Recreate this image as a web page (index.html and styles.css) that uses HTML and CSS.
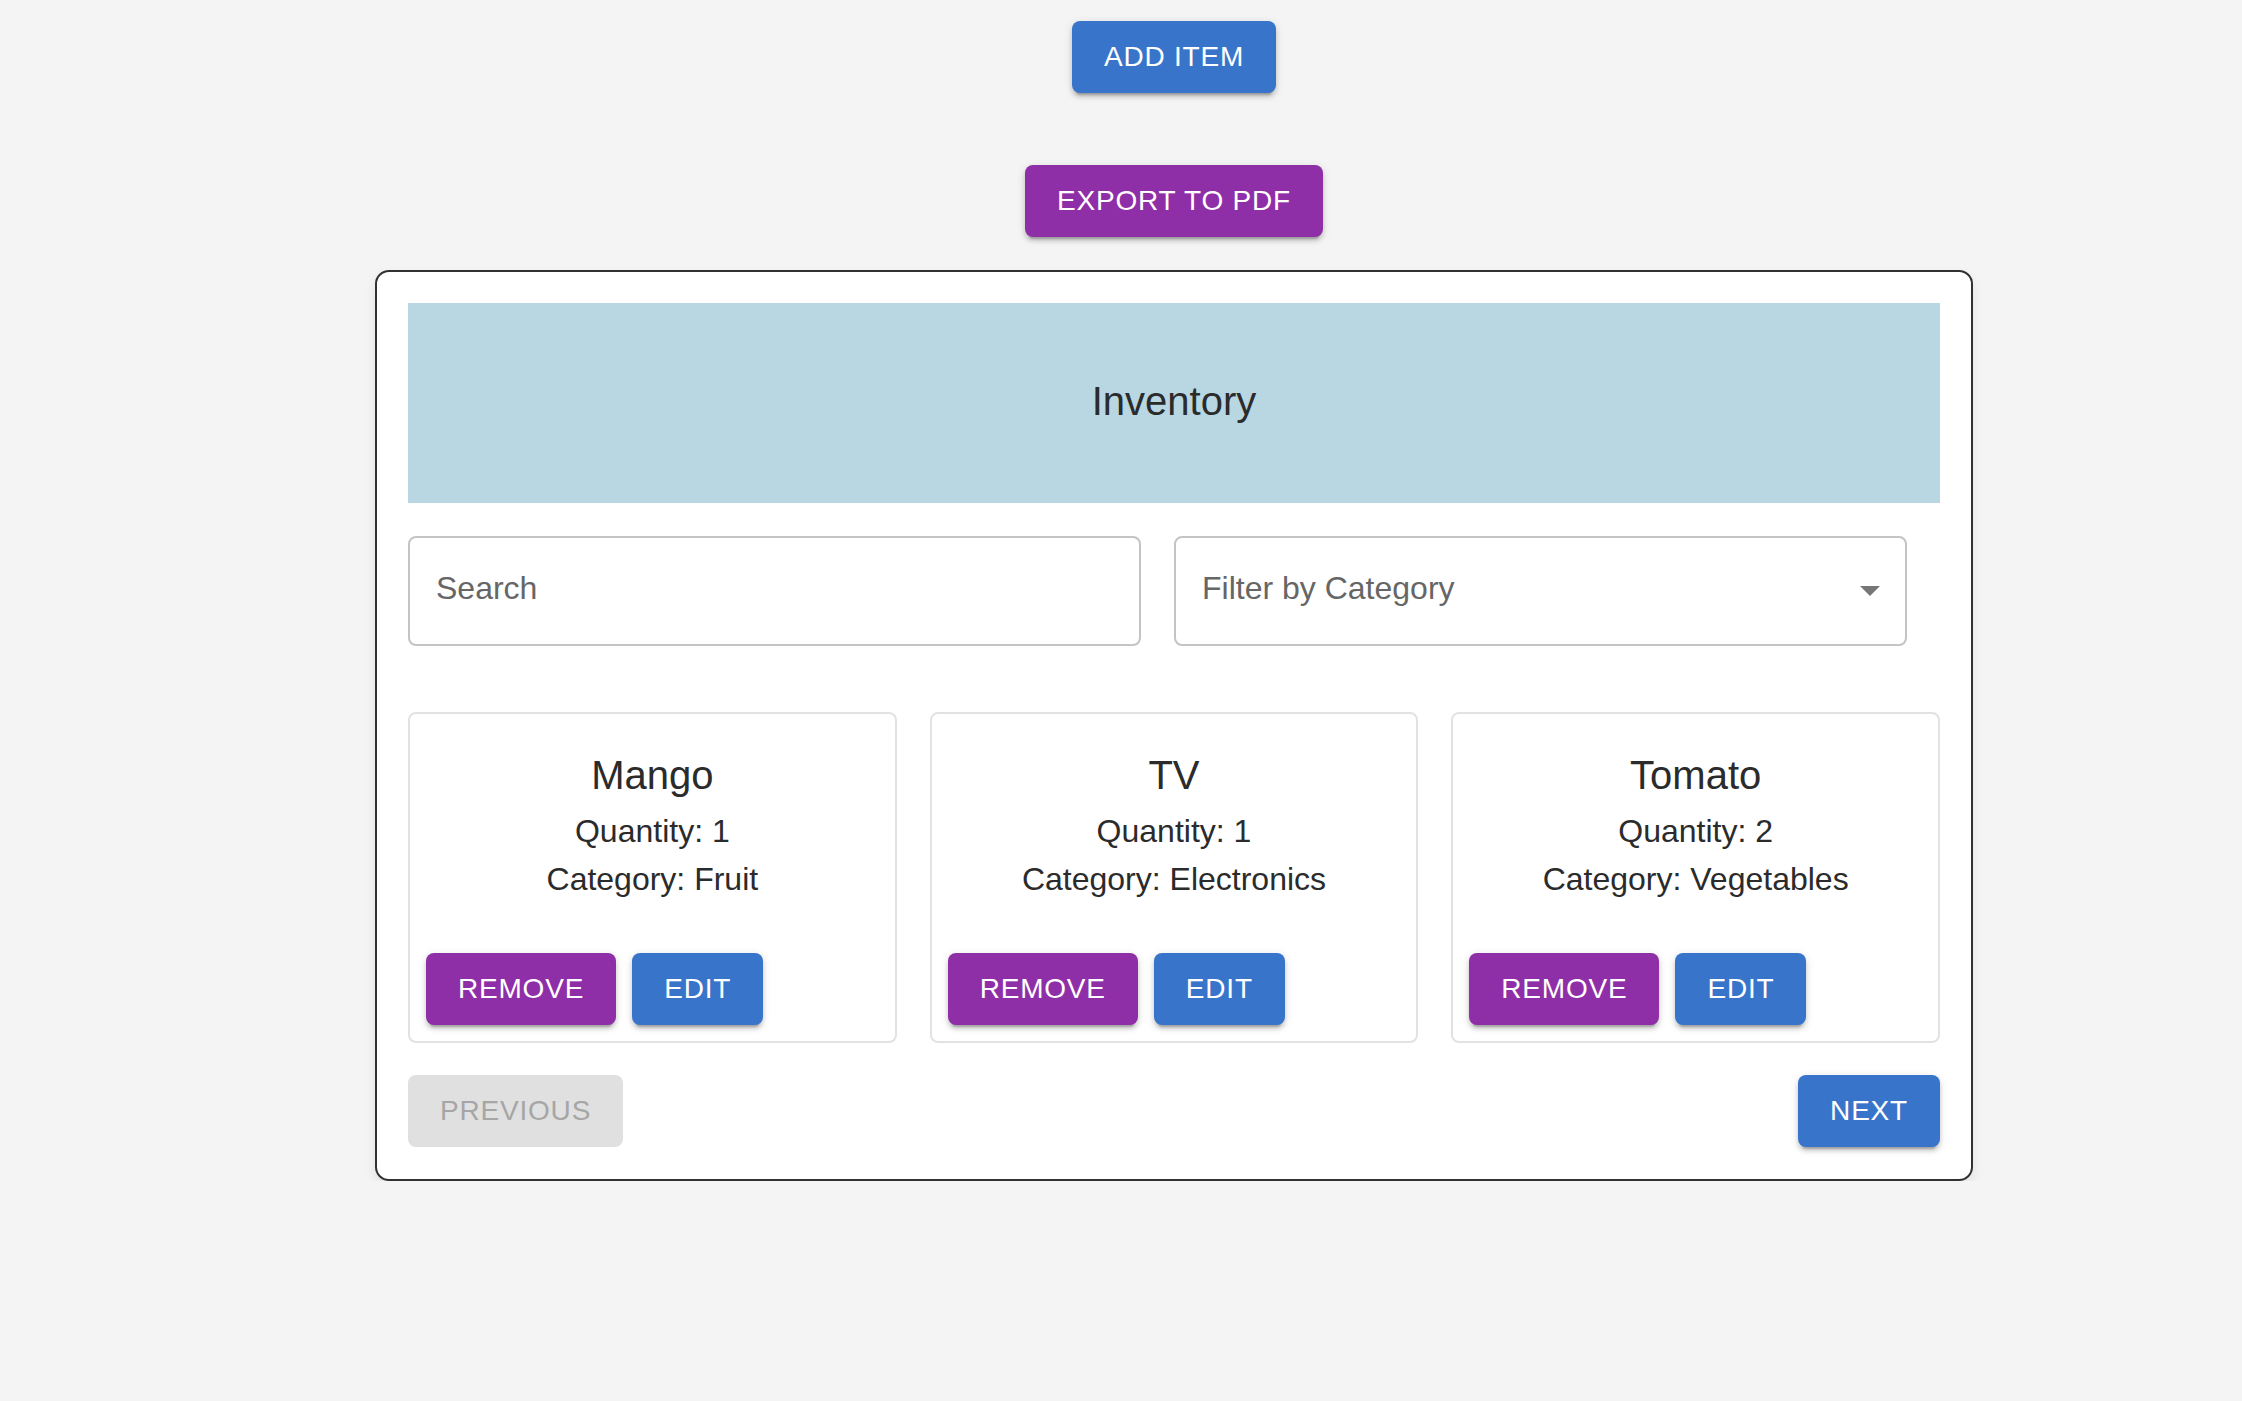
FILE: index.html
```html
<!DOCTYPE html>
<html lang="en">
<head>
<meta charset="utf-8">
<title>Inventory</title>
<link rel="stylesheet" href="styles.css">
</head>
<body>
<div class="page">
  <div class="top-action">
    <button class="btn btn-blue">Add Item</button>
  </div>
  <div class="top-action export">
    <button class="btn btn-purple">Export to PDF</button>
  </div>
  <div class="panel">
    <div class="panel-header">Inventory</div>
    <div class="filters">
      <input class="field" type="text" placeholder="Search">
      <div class="field select">
        <span class="select-label">Filter by Category</span>
        <svg class="arrow" width="20" height="10" viewBox="0 0 20 10"><path d="M0 0 L10 10 L20 0 Z" fill="#767676"/></svg>
      </div>
    </div>
    <div class="items">
      <div class="item">
        <div class="item-body">
          <div class="item-title">Mango</div>
          <div class="item-line">Quantity: 1</div>
          <div class="item-line">Category: Fruit</div>
        </div>
        <div class="item-actions">
          <button class="btn btn-purple">Remove</button>
          <button class="btn btn-blue">Edit</button>
        </div>
      </div>
      <div class="item">
        <div class="item-body">
          <div class="item-title">TV</div>
          <div class="item-line">Quantity: 1</div>
          <div class="item-line">Category: Electronics</div>
        </div>
        <div class="item-actions">
          <button class="btn btn-purple">Remove</button>
          <button class="btn btn-blue">Edit</button>
        </div>
      </div>
      <div class="item">
        <div class="item-body">
          <div class="item-title">Tomato</div>
          <div class="item-line">Quantity: 2</div>
          <div class="item-line">Category: Vegetables</div>
        </div>
        <div class="item-actions">
          <button class="btn btn-purple">Remove</button>
          <button class="btn btn-blue">Edit</button>
        </div>
      </div>
    </div>
    <div class="pager">
      <button class="btn btn-disabled" disabled>Previous</button>
      <button class="btn btn-blue">Next</button>
    </div>
  </div>
</div>
</body>
</html>
```
FILE: styles.css
```css
* { box-sizing: border-box; }

html, body {
  margin: 0;
  padding: 0;
  background: #f4f4f4;
  font-family: "Liberation Sans", Arial, Helvetica, sans-serif;
}

.page {
  width: 1598px;
  margin-left: 375px;
  padding-top: 21px;
}

.top-action {
  display: flex;
  justify-content: center;
}

.top-action.export {
  margin-top: 72px;
}

.btn {
  font-family: "Liberation Sans", Arial, Helvetica, sans-serif;
  font-size: 28px;
  line-height: 48px;
  letter-spacing: 0.8px;
  text-transform: uppercase;
  padding: 12px 32px;
  border: none;
  border-radius: 8px;
  color: #fff;
  cursor: pointer;
  box-shadow: 0 6px 2px -4px rgba(0,0,0,0.2), 0 4px 4px 0 rgba(0,0,0,0.14), 0 2px 10px 0 rgba(0,0,0,0.12);
}

.btn-blue { background: #3875ca; }
.btn-purple { background: #8f2fa8; }
.btn-disabled {
  background: #e0e0e0;
  color: #a6a6a6;
  box-shadow: none;
  cursor: default;
}

.panel {
  margin-top: 33px;
  background: #fff;
  border: 2px solid #313131;
  border-radius: 14px;
  padding: 31px 31px 32px;
  box-shadow: 0 6px 12px rgba(0,0,0,0.08);
}

.panel-header {
  height: 200px;
  background: #b8d7e3;
  display: flex;
  align-items: center;
  justify-content: center;
  font-size: 40px;
  color: #2b2b2b;
  padding-bottom: 3px;
}

.filters {
  margin-top: 33px;
  display: grid;
  grid-template-columns: 1fr 1fr;
  gap: 33px;
  padding-right: 33px;
}

.field {
  height: 110px;
  border: 2px solid #c4c4c4;
  border-radius: 8px;
  background: #fff;
  padding: 0 26px 5px;
  font-family: "Liberation Sans", Arial, Helvetica, sans-serif;
  font-size: 32px;
  color: #666;
  outline: none;
  width: 100%;
}

.field::placeholder { color: #666; }

.select {
  display: flex;
  align-items: center;
  justify-content: space-between;
  padding-right: 25px;
}

.arrow { display: block; margin-top: 5px; }

.items {
  margin-top: 66px;
  display: grid;
  grid-template-columns: repeat(3, 1fr);
  gap: 33px;
}

.item {
  border: 2px solid #e2e2e2;
  border-radius: 8px;
  background: #fff;
}

.item-body {
  padding: 29px 32px 34px;
  text-align: center;
  color: #2b2b2b;
}

.item-title {
  font-size: 40px;
  line-height: 64px;
}

.item-line {
  font-size: 32px;
  line-height: 48px;
}

.item-actions {
  display: flex;
  gap: 16px;
  padding: 16px;
}

.pager {
  margin-top: 32px;
  display: flex;
  justify-content: space-between;
}
```
